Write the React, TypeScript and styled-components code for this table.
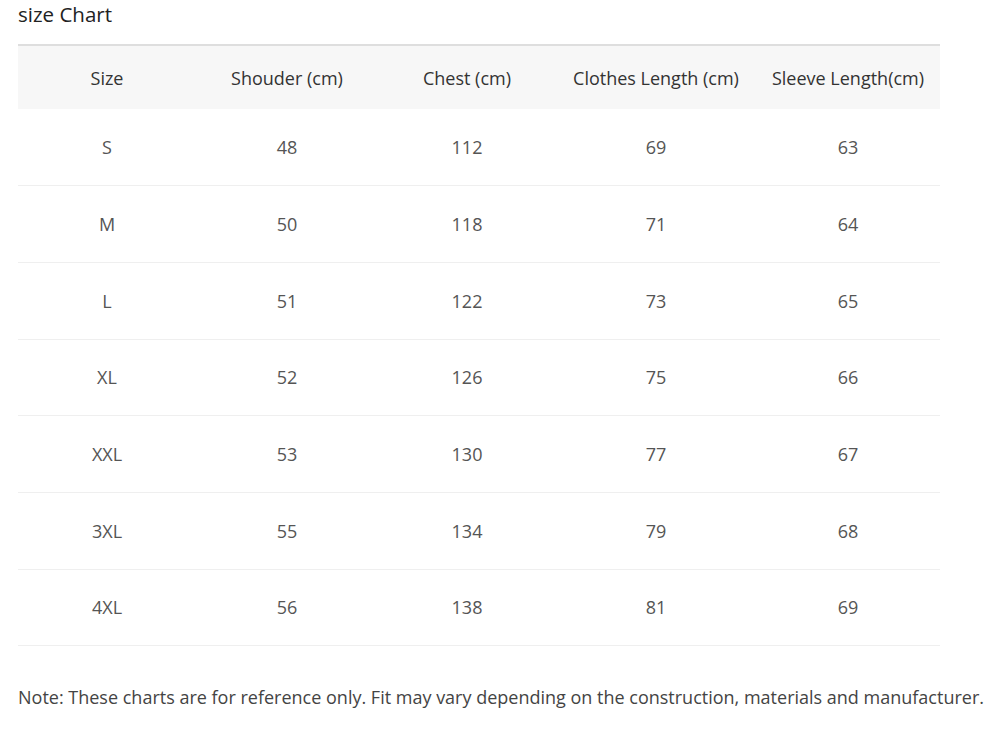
import React from 'react';
import styled, {createGlobalStyle} from "styled-components";

const GlobalStyle = createGlobalStyle`
  html, body {
    margin: 0;
    padding: 0;
    background: #ffffff;
  }
  body {
    font-family: "Open Sans", "Noto Sans", sans-serif;
    color: #333333;
  }
`;

const Page = styled.section`
  display: flex;
  flex-flow: column nowrap;
  align-items: flex-start;

  padding: 1px 0 0 18px;
`;

const ChartTitle = styled.h2`
  margin: 0 0 16px 0;

  color: #222222;
  font-size: 20.5px;
  font-weight: 400;
  line-height: 27px;
`;

const SizeTable = styled.table`
  width: 922px;
  border-collapse: collapse;
  border-top: 2px solid #dedede;
  table-layout: fixed;
`;

const HeadRow = styled.tr`
  background: #f7f7f7;
  height: 64px;
`;

const HeadCell = styled.th<{ $width: number }>`
  width: ${(props) => props.$width}px;
  padding: 0;

  color: #333333;
  font-size: 18px;
  font-weight: 400;
  text-align: center;
  white-space: nowrap;
`;

const BodyRow = styled.tr`
  height: 76.7px;
  border-bottom: 1px solid #efefef;
`;

const BodyCell = styled.td`
  padding: 0;

  color: #555555;
  font-size: 18px;
  text-align: center;
`;

const Note = styled.p`
  margin: 39px 0 0 0;

  color: #444444;
  font-size: 18px;
  line-height: 24px;
  white-space: nowrap;
`;

const columns = [
  {title: 'Size', width: 178},
  {title: 'Shouder (cm)', width: 182},
  {title: 'Chest (cm)', width: 178},
  {title: 'Clothes Length (cm)', width: 200},
  {title: 'Sleeve Length(cm)', width: 184},
];

const rows = [
  ['S', '48', '112', '69', '63'],
  ['M', '50', '118', '71', '64'],
  ['L', '51', '122', '73', '65'],
  ['XL', '52', '126', '75', '66'],
  ['XXL', '53', '130', '77', '67'],
  ['3XL', '55', '134', '79', '68'],
  ['4XL', '56', '138', '81', '69'],
];

export default function App() {
  return (
    <>
      <GlobalStyle />
      <Page>
        <ChartTitle>size Chart</ChartTitle>
        <SizeTable>
          <thead>
            <HeadRow>
              {columns.map((col) =>
                <HeadCell key={col.title} $width={col.width}>{col.title}</HeadCell>
              )}
            </HeadRow>
          </thead>
          <tbody>
            {rows.map((row) =>
              <BodyRow key={row[0]}>
                {row.map((value, i) => <BodyCell key={i}>{value}</BodyCell>)}
              </BodyRow>
            )}
          </tbody>
        </SizeTable>
        <Note>Note: These charts are for reference only. Fit may vary depending on the construction, materials and manufacturer.</Note>
      </Page>
    </>
  );
}
